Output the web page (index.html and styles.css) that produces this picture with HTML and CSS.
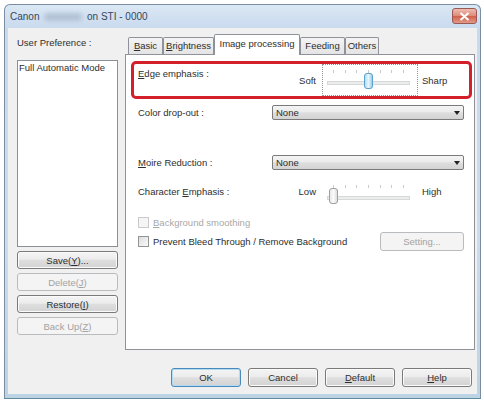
FILE: index.html
```html
<!DOCTYPE html>
<html>
<head>
  <title>Canon on STI - 0000</title>
  <link rel="stylesheet" href="styles.css">
</head>
<body>
  <div class="window">
    <div class="titlebar">
      <span class="title">Canon <span class="smudge"></span> on STI - 0000</span>
      <div class="close-btn">
        <svg width="11" height="9" viewBox="0 0 11 9"><path d="M1.5 1 L9.5 8 M9.5 1 L1.5 8" stroke="#fff" stroke-width="2"/></svg>
      </div>
    </div>
    <div class="client">
      <div class="main">
        <!-- user preference list -->
        <div class="prefs">
          <div class="caption">User Preference :</div>
          <div class="listbox">
            <div class="item">Full Automatic Mode</div>
          </div>
          <button class="btn side-btn">Save(<u>Y</u>)...</button>
          <button class="btn side-btn disabled">Delete(<u>J</u>)</button>
          <button class="btn side-btn">Restore(<u>I</u>)</button>
          <button class="btn side-btn disabled">Back Up(<u>Z</u>)</button>
        </div>

        <!-- property sheet -->
        <div class="sheet">
          <div class="tabs">
            <div class="tab tab-basic"><u>B</u>asic</div>
            <div class="tab tab-bright"><u>B</u>rightness</div>
            <div class="tab tab-image active">Image processing</div>
            <div class="tab tab-feed">Feeding</div>
            <div class="tab tab-others">Others</div>
          </div>
          <div class="panel">
            <div class="highlight">
              <div class="slider-row edge">
                <div class="lbl"><u>E</u>dge emphasis :</div>
                <div class="lo">Soft</div>
                <div class="slider focus">
                  <svg width="94" height="30" viewBox="0 0 94 30">
                    <defs>
                      <linearGradient id="thumbHot" x1="0" y1="0" x2="1" y2="0">
                        <stop offset="0" stop-color="#a9dbf3"/>
                        <stop offset="0.5" stop-color="#e8f6fc"/>
                        <stop offset="1" stop-color="#8ccbe9"/>
                      </linearGradient>
                    </defs>
                    <path d="M10.5 5v3M22.5 5v3M33.5 5v3M45.5 5v3M57.5 5v3M68.5 5v3M80.5 5v3" stroke="#c8c8c8"/>
                    <rect x="4.5" y="16.5" width="82" height="3" fill="#eceeee" stroke="#d6d8da"/>
                    <rect x="41.5" y="8.5" width="8" height="15" rx="2.5" fill="url(#thumbHot)" stroke="#5aa2cc"/>
                  </svg>
                </div>
                <div class="hi">Sharp</div>
              </div>
            </div>

            <div class="combo-row first">
              <div class="combo-lbl">Color drop-out :</div>
              <div class="combo"><span>None</span><i class="arrow"></i></div>
            </div>

            <div class="combo-row second">
              <div class="combo-lbl"><u>M</u>oire Reduction :</div>
              <div class="combo"><span>None</span><i class="arrow"></i></div>
            </div>

            <div class="slider-row char">
              <div class="lbl">Character <u>E</u>mphasis :</div>
              <div class="lo">Low</div>
              <div class="slider">
                <svg width="94" height="30" viewBox="0 0 94 30">
                  <defs>
                    <linearGradient id="thumbIdle" x1="0" y1="0" x2="1" y2="0">
                      <stop offset="0" stop-color="#e6e6e6"/>
                      <stop offset="0.5" stop-color="#fbfbfb"/>
                      <stop offset="1" stop-color="#dadada"/>
                    </linearGradient>
                  </defs>
                  <path d="M10.5 5v3M22.5 5v3M33.5 5v3M45.5 5v3M57.5 5v3M68.5 5v3M80.5 5v3" stroke="#cccccc"/>
                  <rect x="4.5" y="16.5" width="82" height="3" fill="#eceeee" stroke="#d6d8da"/>
                  <rect x="6.5" y="8.5" width="8" height="15" rx="2.5" fill="url(#thumbIdle)" stroke="#a0a0a0"/>
                </svg>
              </div>
              <div class="hi">High</div>
            </div>

            <div class="check-row off">
              <span class="check"></span><span><u>B</u>ackground smoothing</span>
            </div>

            <div class="check-row bleed">
              <span class="check"></span><span>Prevent Bleed Through / Remove Background</span>
              <button class="btn setting disabled">Setting...</button>
            </div>
          </div>
        </div>
      </div>

      <div class="footer">
        <button class="btn foot-btn default">OK</button>
        <button class="btn foot-btn">Cancel</button>
        <button class="btn foot-btn"><u>D</u>efault</button>
        <button class="btn foot-btn"><u>H</u>elp</button>
      </div>
    </div>
  </div>
</body>
</html>
```

FILE: styles.css
```css
* {
  box-sizing: border-box;
}
body {
  margin: 0;
  background: #fff;
  font-family: "Liberation Sans", Arial, sans-serif;
  font-size: 9.5px;
  color: #2e2e2e;
}
u {
  text-decoration: underline;
}

/* window frame */
.window {
  margin: 4px 0 0 4px;
  width: 477px;
  height: 395px;
  border: 1px solid #7a8da2;
  border-bottom-color: #5f8aa0;
  border-radius: 6px 6px 0 0;
  background: linear-gradient(#dbe7f4, #c8daee 24px, #ccdcee 60%, #bcd3e3);
  display: flex;
  flex-direction: column;
}
.titlebar {
  height: 23px;
  display: flex;
  align-items: center;
  padding-left: 5px;
}
.title {
  font-size: 10px;
  color: #34465c;
  display: flex;
  align-items: center;
  white-space: pre;
}
.smudge {
  display: inline-block;
  width: 38px;
  height: 8px;
  margin: 0 2px;
  background: #b3c3d5;
  border-radius: 4px;
  filter: blur(2px);
}
.close-btn {
  margin-left: auto;
  margin-right: 3px;
  align-self: flex-start;
  margin-top: 3px;
  width: 25px;
  height: 16px;
  border: 1px solid #9a5a54;
  border-radius: 3px;
  background: linear-gradient(#eebcb2, #df8a78 50%, #d2604c 52%, #e09a86);
  display: flex;
  align-items: center;
  justify-content: center;
}
.client {
  flex: 1;
  margin: 0 3px 4px 3px;
  background: #f0f0f0;
  display: flex;
  flex-direction: column;
}
.main {
  display: flex;
  gap: 7px;
  padding-left: 9px;
}

/* buttons */
.btn {
  font: inherit;
  color: #2e2e2e;
  padding: 0;
  border: 1px solid #7a7a7a;
  border-radius: 3px;
  background: linear-gradient(#f4f4f4, #ececec 45%, #dedede 52%, #d3d3d3);
  box-shadow: inset 0 0 0 1px #fbfbfb;
  text-align: center;
}
.btn.disabled {
  border-color: #b8bcbf;
  background: #f4f4f4;
  box-shadow: none;
  color: #a2a2a2;
}

/* left column */
.prefs {
  width: 101px;
  padding-top: 9px;
  display: flex;
  flex-direction: column;
}
.caption {
  line-height: 12px;
}
.listbox {
  margin-top: 11px;
  height: 187px;
  border: 1px solid #8a9098;
  background: #fff;
}
.item {
  line-height: 12px;
  padding: 1px 1px;
}
.side-btn {
  width: 101px;
  height: 18px;
  margin-top: 4px;
}

/* tabs */
.sheet {
  width: 350px;
  padding-top: 6px;
}
.tabs {
  height: 20px;
  display: flex;
  align-items: flex-end;
  padding-left: 3px;
}
.tab {
  height: 17px;
  line-height: 15px;
  text-align: center;
  border: 1px solid #8f929a;
  border-bottom: none;
  border-radius: 2px 2px 0 0;
  background: linear-gradient(#f4f4f4, #e4e4e4);
}
.tab-basic { width: 35px; }
.tab-bright { width: 51px; }
.tab-image { width: 86px; }
.tab-feed { width: 45px; }
.tab-others { width: 34px; }
.tab.active {
  height: 21px;
  line-height: 17px;
  background: #fff;
  margin-bottom: -1px;
  position: relative;
  z-index: 1;
}
.panel {
  height: 296px;
  border: 1px solid #8f929a;
  background: #fff;
  padding: 6px 10px 0 12px;
}

/* highlighted group */
.highlight {
  margin: 0 -8px 0 -7px;
  height: 38px;
  border: 3px solid #d3202b;
  border-radius: 5px;
  padding-left: 4px;
}

/* sliders */
.slider-row {
  display: flex;
  height: 32px;
  line-height: 12px;
}
.slider-row .lbl {
  width: 148px;
}
.slider-row .lo {
  width: 30px;
  text-align: right;
}
.slider {
  width: 96px;
  height: 32px;
  margin-left: 6px;
  border: 1px solid transparent;
}
.slider svg {
  display: block;
}
.slider.focus {
  border: 1px dotted #939393;
}
.slider-row .hi {
  margin-left: 4px;
}
.edge .lbl {
  padding-top: 4px;
}
.edge .lo,
.edge .hi {
  padding-top: 11px;
}
.char {
  margin-top: 9px;
}
.char .lbl,
.char .lo,
.char .hi {
  padding-top: 7px;
}

/* drop-down lists */
.combo-row {
  display: flex;
  align-items: center;
  height: 15px;
}
.combo-row.first {
  margin-top: 6px;
}
.combo-row.second {
  margin-top: 35px;
}
.combo-lbl {
  width: 134px;
}
.combo {
  width: 192px;
  height: 15px;
  border: 1px solid #7a7a7a;
  border-radius: 2px;
  background: linear-gradient(#f4f4f4, #ececec 45%, #dedede 52%, #d3d3d3);
  display: flex;
  align-items: center;
  padding-left: 3px;
}
.arrow {
  margin-left: auto;
  margin-right: 3px;
  width: 0;
  height: 0;
  border-left: 3.5px solid transparent;
  border-right: 3.5px solid transparent;
  border-top: 4px solid #222;
}

/* check boxes */
.check-row {
  display: flex;
  align-items: center;
}
.check {
  width: 11px;
  height: 11px;
  margin-right: 4px;
  border: 1px solid #939494;
  background: linear-gradient(135deg, #dcdcdc, #fbfbfb);
}
.check-row.off {
  height: 14px;
  margin-top: 4px;
  color: #a8a8a8;
}
.check-row.off .check {
  border-color: #cacaca;
  background: #f5f5f5;
}
.check-row.bleed {
  height: 19px;
  margin-top: 3px;
}
.setting {
  margin-left: auto;
  width: 84px;
  height: 19px;
}

/* dialog buttons */
.footer {
  display: flex;
  justify-content: flex-end;
  gap: 7px;
  margin-top: 18px;
  padding-right: 5px;
}
.foot-btn {
  width: 70px;
  height: 19px;
}
.foot-btn.default {
  border-color: #4a8aba;
  box-shadow: inset 0 0 0 1px #b2dcf2;
}
```
